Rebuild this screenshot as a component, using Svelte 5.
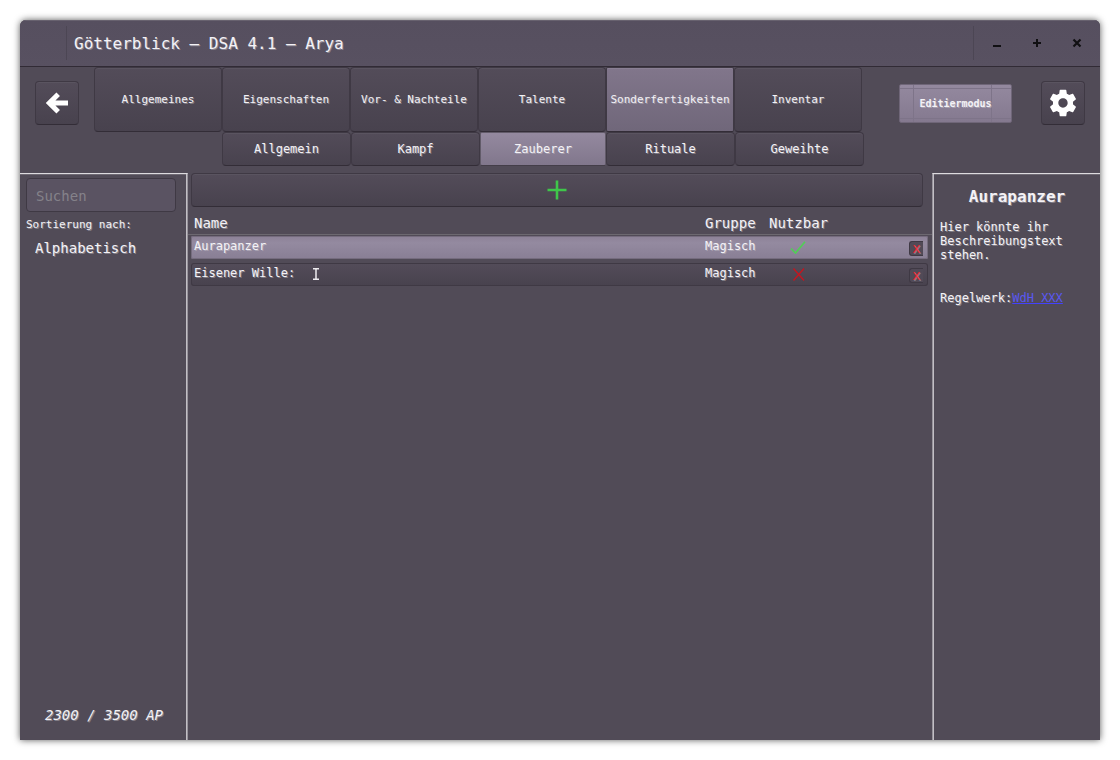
<script>
  const tabs = ['Allgemeines', 'Eigenschaften', 'Vor- & Nachteile', 'Talente', 'Sonderfertigkeiten', 'Inventar'];
  const subTabs = ['Allgemein', 'Kampf', 'Zauberer', 'Rituale', 'Geweihte'];
  let tab = $state('Sonderfertigkeiten');
  let subTab = $state('Zauberer');
  let search = $state('');
  let rows = $state([
    { name: 'Aurapanzer', group: 'Magisch', usable: true },
    { name: 'Eisener Wille:', group: 'Magisch', usable: false, caret: true }
  ]);
  let selected = $state('Aurapanzer');
</script>

<div class="window">
  <header class="titlebar">
    <h1>Götterblick – DSA 4.1 – Arya</h1>
    <div class="controls">
      <button aria-label="Minimieren"><svg width="10" height="10" viewBox="0 0 10 10"><path d="M1 7h8v2H1z" /></svg></button>
      <button aria-label="Maximieren"><svg width="10" height="10" viewBox="0 0 10 10"><path d="M4 1h2v3h3v2H6v3H4V6H1V4h3z" /></svg></button>
      <button aria-label="Schließen"><svg width="10" height="10" viewBox="0 0 10 10"><path d="M1.5 1.5l7 7M8.5 1.5l-7 7" stroke="#111013" stroke-width="2.2" /></svg></button>
    </div>
  </header>

  <div class="toolbar">
    <button class="btn square" aria-label="Zurück">
      <svg width="22" height="22" viewBox="0 0 22 22"><path d="M12.2 2.2L3.4 11l8.8 8.8M4 11h18" fill="none" stroke="#fff" stroke-width="5" /></svg>
    </button>
    <nav>
      <div class="tabs">
        {#each tabs as t}
          <button class="btn tab" class:active={tab === t} onclick={() => (tab = t)}>{t}</button>
        {/each}
      </div>
      <div class="subtabs">
        {#each subTabs as t}
          <button class="btn sub" class:active={subTab === t} onclick={() => (subTab = t)}>{t}</button>
        {/each}
      </div>
    </nav>
    <button class="edit">Editiermodus</button>
    <button class="btn square" aria-label="Einstellungen">
      <svg width="32" height="32" viewBox="0 0 24 24"><path fill="#fff" d="M19.43 12.98c.04-.32.07-.64.07-.98s-.03-.66-.07-.98l2.11-1.65c.19-.15.24-.42.12-.64l-2-3.46c-.12-.22-.39-.3-.61-.22l-2.49 1c-.52-.4-1.08-.73-1.69-.98l-.38-2.65C14.46 2.18 14.25 2 14 2h-4c-.25 0-.46.18-.49.42l-.38 2.65c-.61.25-1.17.59-1.69.98l-2.49-1c-.23-.09-.49 0-.61.22l-2 3.46c-.13.22-.07.49.12.64l2.11 1.65c-.04.32-.07.65-.07.98s.03.66.07.98l-2.11 1.65c-.19.15-.24.42-.12.64l2 3.46c.12.22.39.3.61.22l2.49-1c.52.4 1.08.73 1.69.98l.38 2.65c.03.24.24.42.49.42h4c.25 0 .46-.18.49-.42l.38-2.65c.61-.25 1.17-.59 1.69-.98l2.49 1c.23.09.49 0 .61-.22l2-3.46c.12-.22.07-.49-.12-.64l-2.11-1.65zM12 15.5c-1.93 0-3.5-1.57-3.5-3.5s1.57-3.5 3.5-3.5 3.5 1.57 3.5 3.5-1.57 3.5-3.5 3.5z" /></svg>
    </button>
  </div>

  <div class="body">
    <aside class="left">
      <input type="text" placeholder="Suchen" aria-label="Suchen" bind:value={search} />
      <label for="sort">Sortierung nach:</label>
      <select id="sort"><option>Alphabetisch</option></select>
      <p class="points">2300 / 3500 AP</p>
    </aside>

    <main>
      <button class="btn add" aria-label="Hinzufügen">
        <svg width="20" height="20" viewBox="0 0 20 20"><path d="M10 .5v19M.5 10h19" stroke="#3fc64a" stroke-width="2.6" /></svg>
      </button>
      <table>
        <thead>
          <tr><th>Name</th><th>Gruppe</th><th>Nutzbar</th></tr>
        </thead>
        <tbody>
          {#each rows as row}
            <tr class:selected={selected === row.name} onclick={() => (selected = row.name)}>
              <td>
                {row.name}
                {#if row.caret}
                  <svg class="caret" width="8" height="12" viewBox="0 0 8 12"><path d="M1 .8h6M1 11.2h6M4 1v10" fill="none" stroke="#eeecf0" stroke-width="1.5" /></svg>
                {/if}
              </td>
              <td>{row.group}</td>
              <td>
                {#if row.usable}
                  <svg class="state" width="16" height="14" viewBox="0 0 16 14" role="img" aria-label="Ja"><path d="M1 7.5l4.5 4.5L15 .8" fill="none" stroke="#50cf55" stroke-width="1.7" /></svg>
                {:else}
                  <svg class="state" width="16" height="14" viewBox="0 0 16 14" role="img" aria-label="Nein"><path d="M3.5 .5l10.5 12M14 .5L3.5 12.5" fill="none" stroke="#c4161f" stroke-width="1.4" /></svg>
                {/if}
              </td>
              <td><button class="del" aria-label="Entfernen">x</button></td>
            </tr>
          {/each}
        </tbody>
      </table>
    </main>

    <aside class="right">
      <h2>Aurapanzer</h2>
      <p>Hier könnte ihr Beschreibungstext stehen.</p>
      <p class="source">Regelwerk:<a href="#regelwerk">WdH XXX</a></p>
    </aside>
  </div>
</div>

<style>
  :global(body) {
    margin: 0;
    background: #fff;
  }
  * {
    box-sizing: border-box;
  }
  .window {
    min-height: calc(100vh - 40px);
    margin: 20px;
    display: flex;
    flex-direction: column;
    overflow: hidden;
    border-radius: 6px 6px 0 0;
    background: #514b57;
    box-shadow: 0 0 7px rgba(0, 0, 0, 0.65);
    color: #f4f2f6;
    font: 12px/14px "DejaVu Sans Mono", "Liberation Mono", monospace;
    text-shadow: 1px 1px 0 rgba(215, 213, 220, 0.4);
  }
  button,
  input,
  select {
    font: inherit;
    color: inherit;
    text-shadow: inherit;
    margin: 0;
    padding: 0;
    border: 0;
    background: none;
  }
  svg {
    display: block;
  }
  h1,
  h2,
  p {
    margin: 0;
  }
  .titlebar {
    display: flex;
    align-items: center;
    height: 47px;
    padding: 0 3px 0 46px;
    background: linear-gradient(#564f5f, #585161);
    border-bottom: 1px solid #312b35;
    box-shadow: inset 0 1px #68626f;
  }
  h1 {
    flex: 1;
    padding: 2px 7px 0;
    border-left: 1px solid #4c4654;
    font-size: 16px;
    font-weight: 400;
    line-height: 32px;
  }
  .controls {
    display: flex;
    padding-left: 3px;
    border-left: 1px solid #4c4654;
  }
  .controls button {
    display: grid;
    place-items: center;
    width: 40px;
    height: 34px;
    fill: #111013;
  }
  .toolbar {
    display: flex;
    align-items: flex-start;
    height: 106px;
    padding: 0 15px;
  }
  .btn {
    border: 1px solid #3f3944;
    border-bottom-color: #332d37;
    border-radius: 4px;
    background: linear-gradient(#534c59, #48424e);
    box-shadow: inset 0 1px #5a5460;
    text-align: center;
  }
  .square {
    display: grid;
    place-items: center;
    flex: none;
    width: 44px;
    height: 44px;
    margin-top: 14px;
  }
  nav {
    margin: 0 auto 0 15px;
  }
  .tabs {
    display: grid;
    grid-template-columns: repeat(6, 128px);
  }
  .subtabs {
    display: grid;
    grid-template-columns: 129px 129px 126px 129px 129px;
    margin-left: 128px;
  }
  .tab {
    height: 65px;
    font-size: 11px;
  }
  .tab.active {
    border-radius: 2px;
    background: linear-gradient(#81768b, #70677a);
    box-shadow: inset 0 1px #8a8094;
  }
  .sub {
    height: 34px;
  }
  .sub.active {
    border-color: #625b69 #625b69 #443e49;
    border-radius: 2px;
    background: linear-gradient(#94899f, #81778c);
    box-shadow: none;
  }
  .edit {
    width: 113px;
    height: 39px;
    margin: 17px 29px 0 0;
    border: 1px solid #6f6678;
    border-radius: 2px;
    background:
      linear-gradient(#7e7489, #7e7489) 13px 0 / 1px 100% no-repeat,
      linear-gradient(#7e7489, #7e7489) 91px 0 / 1px 100% no-repeat,
      linear-gradient(#7e7489, #7e7489) 0 3px / 100% 1px no-repeat,
      linear-gradient(#7e7489, #7e7489) 0 33px / 100% 1px no-repeat,
      linear-gradient(#94899f, #84798f);
    font-size: 10px;
    font-weight: 700;
  }
  .body {
    flex: 1;
    display: grid;
    grid-template-columns: 168px minmax(0, 1fr) 168px;
  }
  .left {
    display: flex;
    flex-direction: column;
    padding: 4px 11px 18px 6px;
    border-top: 1px solid #dddbdf;
    border-right: 1px solid #97939b;
    box-shadow: inset -1px 0 #c2bfc5, inset 0 1px #6f6a74;
  }
  input {
    width: 150px;
    height: 34px;
    padding: 2px 9px 0;
    border: 1px solid #3f3944;
    border-radius: 4px;
    background: #5a5362;
    font-size: 14px;
    text-shadow: none;
  }
  input::placeholder {
    color: #85828a;
    opacity: 1;
  }
  label {
    margin-top: 6px;
    font-size: 11px;
  }
  select {
    appearance: none;
    height: 24px;
    margin-top: 4px;
    padding-left: 9px;
    font-size: 14px;
    line-height: 20px;
  }
  .points {
    margin-top: auto;
    padding-left: 19px;
    font-size: 14px;
    font-style: italic;
  }
  main {
    display: flex;
    flex-direction: column;
    align-items: stretch;
  }
  .add {
    display: grid;
    place-items: center;
    height: 34px;
    margin: 0 9px 0 3px;
    padding-bottom: 1px;
  }
  table,
  thead,
  tbody {
    display: block;
  }
  tr {
    display: grid;
    grid-template-columns: 1fr 64px 140px 19px;
  }
  th,
  td {
    padding: 0;
    text-align: left;
  }
  thead tr {
    height: 28px;
    padding: 9px 4px 0 6px;
    border-bottom: 1px solid #6c6870;
    font-size: 14px;
  }
  th {
    font-weight: 400;
  }
  tbody tr {
    height: 23px;
    margin: 1px 4px 4px 3px;
    padding: 2px 0 0 3px;
    border-radius: 3px;
    background: linear-gradient(#534c59, #48424e);
    box-shadow: inset 0 0 0 1px #3f3944;
  }
  tbody tr.selected {
    border-radius: 2px;
    background: linear-gradient(#8c8197, #948aa0 30%, #8a8096 90%);
    box-shadow: inset 0 0 0 1px #756c7e;
  }
  tbody td:first-child {
    display: flex;
    gap: 17px;
  }
  td {
    line-height: 17px;
  }
  .caret {
    margin-top: 3px;
  }
  .state {
    margin: 3px 0 0 21px;
  }
  .del {
    display: block;
    width: 14px;
    height: 15px;
    margin-top: 3px;
    border: 1px solid #3f3944;
    border-right: 0;
    border-radius: 3px 0 0 3px;
    background: #514a57;
    color: #ef2b35;
    font-size: 14px;
    line-height: 13px;
    text-align: center;
  }
  .right {
    padding: 15px 6px 0 7px;
    border-top: 1px solid #dddbdf;
    border-left: 1px solid #97939b;
    box-shadow: inset 1px 0 #c2bfc5, inset 0 1px #6f6a74;
  }
  h2 {
    font-size: 16px;
    line-height: 16px;
    text-align: center;
  }
  h2 + p {
    margin-top: 15px;
  }
  .source {
    margin-top: 29px;
    white-space: nowrap;
  }
  a {
    color: #5a58f2;
    text-decoration-color: #4341ff;
    text-shadow: none;
  }
</style>
